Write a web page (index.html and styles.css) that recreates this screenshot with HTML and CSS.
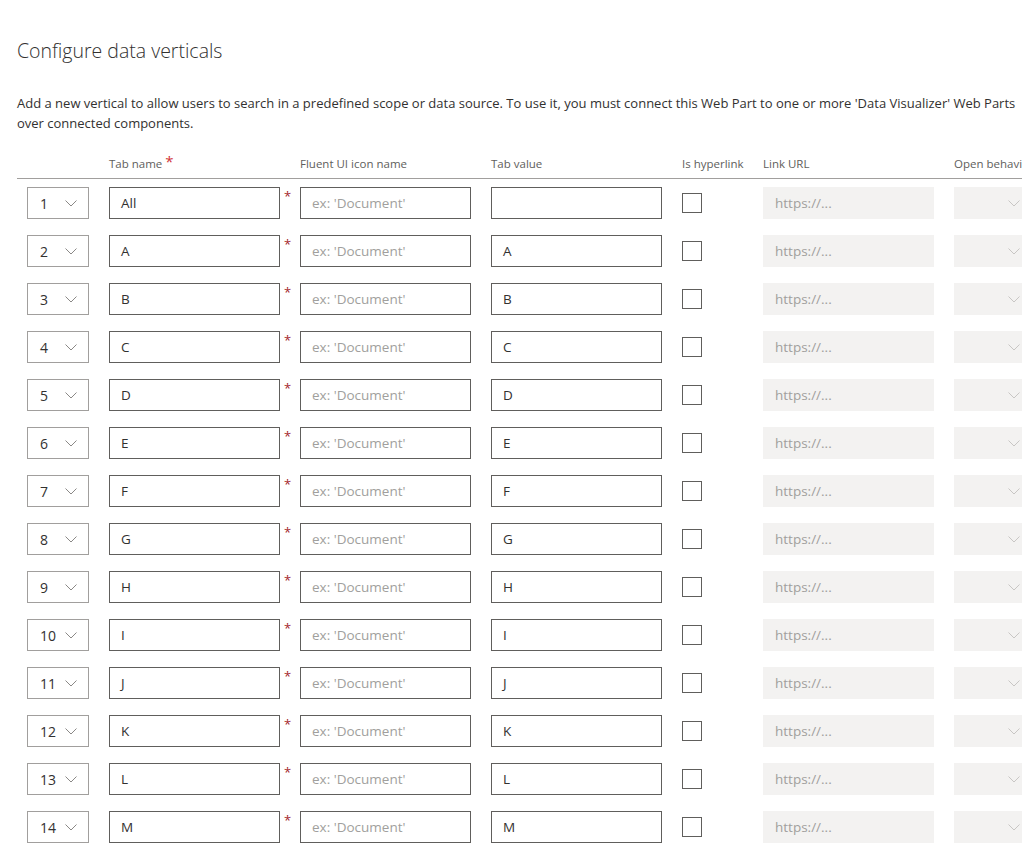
FILE: index.html
```html
<!DOCTYPE html>
<html lang="en">
<head>
<meta charset="utf-8">
<title>Configure data verticals</title>
<link rel="stylesheet" href="styles.css">
</head>
<body>
<div class="panel">
  <h1 class="title">Configure data verticals</h1>
  <p class="desc"><span class="line">Add a new vertical to allow users to search in a predefined scope or data source. To use it, you must connect this Web Part to one or more 'Data Visualizer' Web Parts</span><br>over connected components.</p>

  <div class="table">
    <div class="grid head">
      <div class="hcell"></div>
      <div class="hcell">Tab name <span class="hreq">*</span></div>
      <div class="hcell">Fluent UI icon name</div>
      <div class="hcell">Tab value</div>
      <div class="hcell">Is hyperlink</div>
      <div class="hcell">Link URL</div>
      <div class="hcell">Open behavi</div>
    </div>
    <div class="rows" id="rows"></div>
  </div>
</div>
<script src="app.js"></script>
</body>
</html>
```

FILE: app.js
```js
const data = [["All",""],["A","A"],["B","B"],["C","C"],["D","D"],["E","E"],["F","F"],["G","G"],["H","H"],["I","I"],["J","J"],["K","K"],["L","L"],["M","M"]];
const chev = '<svg class="chev" width="12" height="7" viewBox="0 0 12 7"><polyline points="0.5,0.5 6,6 11.5,0.5" fill="none" stroke="currentColor" stroke-width="1"/></svg>';
const rows = document.getElementById('rows');
rows.innerHTML = data.map((d, i) => `
  <div class="grid row">
    <div class="cell"><div class="order"><span>${i + 1}</span>${chev}</div></div>
    <div class="cell req"><div class="field">${d[0]}</div></div>
    <div class="cell"><div class="field ph">ex: 'Document'</div></div>
    <div class="cell"><div class="field">${d[1]}</div></div>
    <div class="cell"><div class="check"></div></div>
    <div class="cell"><div class="field disabled ph">https://...</div></div>
    <div class="cell"><div class="select disabled">${chev}</div></div>
  </div>`).join('');
```

FILE: styles.css
```css
html, body {
  margin: 0;
  padding: 0;
  overflow: hidden;
  background: #ffffff;
}
body {
  font-family: "Open Sans", "Noto Sans", sans-serif;
  color: #323130;
  width: 1022px;
  height: 859px;
}
.panel {
  padding: 35px 0 0 17px;
}
.title {
  margin: 0;
  font-size: 19.5px;
  font-weight: 300;
  line-height: 32px;
  color: #323130;
  white-space: nowrap;
}
.desc {
  margin: 26px 0 0;
  font-size: 13px;
  line-height: 20px;
  white-space: nowrap;
}
.table {
  margin-top: 16px;
}
.grid {
  display: grid;
  grid-template-columns: 72px 171px 171px 171px 61px 171px 78px;
  column-gap: 20px;
  width: 1100px;
}
.head {
  height: 29px;
  border-bottom: 1px solid #a19f9d;
  align-items: center;
}
.hcell {
  font-size: 11.5px;
  color: #605e5c;
  white-space: nowrap;
  line-height: 16px;
}
.hreq {
  color: #d13438;
  font-size: 15px;
  vertical-align: top;
  position: relative;
  top: -3px;
}
.rows {
  padding-top: 8px;
  display: flex;
  flex-direction: column;
  gap: 16px;
}
.row {
  height: 32px;
  align-items: center;
}
.cell {
  position: relative;
  height: 32px;
  display: flex;
  align-items: center;
}
.order {
  margin-left: 10px;
  box-sizing: border-box;
  width: 62px;
  height: 32px;
  border: 1px solid #a19f9d;
  display: flex;
  align-items: center;
  justify-content: space-between;
  padding: 0 11px 0 12px;
  font-size: 14px;
  color: #323130;
}
.chev {
  display: block;
  color: #8a8886;
}
.field {
  box-sizing: border-box;
  width: 171px;
  height: 32px;
  border: 1px solid #605e5c;
  padding: 0 11px;
  font-size: 13.5px;
  line-height: 30px;
  color: #323130;
  white-space: nowrap;
  overflow: hidden;
}
.field.ph {
  color: #a19f9d;
}
.field.disabled {
  border-color: #f3f2f1;
  background: #f3f2f1;
}
.req::after {
  content: "*";
  position: absolute;
  left: 175px;
  top: 3px;
  font-size: 13px;
  line-height: 13px;
  color: #a4262c;
}
.check {
  box-sizing: border-box;
  width: 20px;
  height: 20px;
  border: 1px solid #605e5c;
}
.select {
  box-sizing: border-box;
  width: 78px;
  height: 32px;
  background: #f3f2f1;
  display: flex;
  align-items: center;
  justify-content: flex-end;
  padding-right: 12px;
}
.select .chev {
  color: #c8c6c4;
}
```
